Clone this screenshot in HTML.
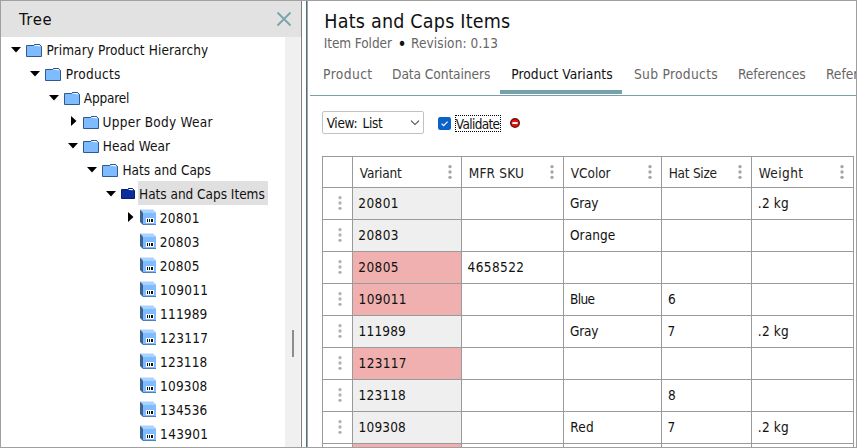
<!DOCTYPE html>
<html><head><meta charset="utf-8"><title>Tree</title><style>
html,body{margin:0;padding:0;}
body{width:857px;height:448px;position:relative;overflow:hidden;background:#fff;font-family:"DejaVu Sans Condensed","DejaVu Sans","Liberation Sans",sans-serif;font-stretch:condensed;color:#111;font-size:13.5px;}
.a{position:absolute;}
.t{position:absolute;white-space:nowrap;line-height:20px;height:20px;}
.frame{left:0;top:0;width:855px;height:446px;border:1px solid #a0a0a0;z-index:50;pointer-events:none;}
.hdr{left:1px;top:1px;width:300px;height:35.5px;background:#e2e2e2;}
.track{left:285px;top:37px;width:16px;height:410px;background:#f0f0f0;}
.thumb{left:292px;top:330px;width:2px;height:27px;background:#8c8c8c;}
.hl{left:138px;top:181px;width:130px;height:24px;background:#e0e0e0;}
.vl{width:1px;top:1px;height:446px;}
.gl{background:#9a9a9a;}
.gray{color:#666;}
</style></head><body>
<div class="a hdr"></div>
<div class="t " id="tree" style="left:19.00px;top:10.00px;font-size:16.5px;letter-spacing:0.693px;">Tree</div>
<svg class="a" style="left:275px;top:10px" width="18" height="18" viewBox="0 0 18 18"><path d="M2.5 2.5 L15.5 15.5 M15.5 2.5 L2.5 15.5" stroke="#7aa3ac" stroke-width="1.8" fill="none"/></svg>
<div class="a track"></div><div class="a thumb"></div>
<div class="a vl" style="left:300px;background:#f8f8f8;top:37px;height:410px"></div>
<div class="a vl" style="left:301px;background:#808080"></div>
<div class="a vl" style="left:306px;background:#686868"></div>
<div class="a vl" style="left:307px;background:#8ab0ba"></div>
<div class="a hl"></div>
<svg class="a" style="left:11px;top:47px" width="10" height="6" viewBox="0 0 10 6"><path d="M0 0 L10 0 L5 5.5 Z" fill="#000"/></svg>
<svg class="a" style="left:26px;top:44px" width="16" height="13" viewBox="0 0 16 13"><path d="M7.5 1.5 L8.5 0.5 L13.5 0.5 L15.5 2.5 L15.5 12.5 L0.5 12.5 L0.5 1.5 Z" fill="#7fbcff" stroke="#2f5a8a" stroke-width="1"/><path d="M8.2 1.6 L9 1 L13.2 1 L14.6 2.4 Z" fill="#fff"/><path d="M7.5 1.5 L8.5 0.5 L13.5 0.5 L15.5 2.5" fill="none" stroke="#2f5a8a" stroke-width="1"/></svg>
<div class="t " id="tr0" style="left:46.42px;top:40.00px;font-size:13.5px;letter-spacing:0.100px;">Primary Product Hierarchy</div>
<svg class="a" style="left:30px;top:71px" width="10" height="6" viewBox="0 0 10 6"><path d="M0 0 L10 0 L5 5.5 Z" fill="#000"/></svg>
<svg class="a" style="left:45px;top:68px" width="16" height="13" viewBox="0 0 16 13"><path d="M7.5 1.5 L8.5 0.5 L13.5 0.5 L15.5 2.5 L15.5 12.5 L0.5 12.5 L0.5 1.5 Z" fill="#7fbcff" stroke="#2f5a8a" stroke-width="1"/><path d="M8.2 1.6 L9 1 L13.2 1 L14.6 2.4 Z" fill="#fff"/><path d="M7.5 1.5 L8.5 0.5 L13.5 0.5 L15.5 2.5" fill="none" stroke="#2f5a8a" stroke-width="1"/></svg>
<div class="t " id="tr1" style="left:65.78px;top:64.00px;font-size:13.5px;letter-spacing:0.320px;">Products</div>
<svg class="a" style="left:49px;top:95px" width="10" height="6" viewBox="0 0 10 6"><path d="M0 0 L10 0 L5 5.5 Z" fill="#000"/></svg>
<svg class="a" style="left:64px;top:92px" width="16" height="13" viewBox="0 0 16 13"><path d="M7.5 1.5 L8.5 0.5 L13.5 0.5 L15.5 2.5 L15.5 12.5 L0.5 12.5 L0.5 1.5 Z" fill="#7fbcff" stroke="#2f5a8a" stroke-width="1"/><path d="M8.2 1.6 L9 1 L13.2 1 L14.6 2.4 Z" fill="#fff"/><path d="M7.5 1.5 L8.5 0.5 L13.5 0.5 L15.5 2.5" fill="none" stroke="#2f5a8a" stroke-width="1"/></svg>
<div class="t " id="tr2" style="left:83.78px;top:88.00px;font-size:13.5px;letter-spacing:-0.187px;">Apparel</div>
<svg class="a" style="left:71px;top:116px" width="6" height="10" viewBox="0 0 6 10"><path d="M0 0 L5.5 5 L0 10 Z" fill="#000"/></svg>
<svg class="a" style="left:83px;top:116px" width="16" height="13" viewBox="0 0 16 13"><path d="M7.5 1.5 L8.5 0.5 L13.5 0.5 L15.5 2.5 L15.5 12.5 L0.5 12.5 L0.5 1.5 Z" fill="#7fbcff" stroke="#2f5a8a" stroke-width="1"/><path d="M8.2 1.6 L9 1 L13.2 1 L14.6 2.4 Z" fill="#fff"/><path d="M7.5 1.5 L8.5 0.5 L13.5 0.5 L15.5 2.5" fill="none" stroke="#2f5a8a" stroke-width="1"/></svg>
<div class="t " id="tr3" style="left:102.56px;top:112.00px;font-size:13.5px;letter-spacing:0.263px;">Upper Body Wear</div>
<svg class="a" style="left:68px;top:143px" width="10" height="6" viewBox="0 0 10 6"><path d="M0 0 L10 0 L5 5.5 Z" fill="#000"/></svg>
<svg class="a" style="left:83px;top:140px" width="16" height="13" viewBox="0 0 16 13"><path d="M7.5 1.5 L8.5 0.5 L13.5 0.5 L15.5 2.5 L15.5 12.5 L0.5 12.5 L0.5 1.5 Z" fill="#7fbcff" stroke="#2f5a8a" stroke-width="1"/><path d="M8.2 1.6 L9 1 L13.2 1 L14.6 2.4 Z" fill="#fff"/><path d="M7.5 1.5 L8.5 0.5 L13.5 0.5 L15.5 2.5" fill="none" stroke="#2f5a8a" stroke-width="1"/></svg>
<div class="t " id="tr4" style="left:102.84px;top:136.00px;font-size:13.5px;letter-spacing:0.040px;">Head Wear</div>
<svg class="a" style="left:87px;top:167px" width="10" height="6" viewBox="0 0 10 6"><path d="M0 0 L10 0 L5 5.5 Z" fill="#000"/></svg>
<svg class="a" style="left:102px;top:164px" width="16" height="13" viewBox="0 0 16 13"><path d="M7.5 1.5 L8.5 0.5 L13.5 0.5 L15.5 2.5 L15.5 12.5 L0.5 12.5 L0.5 1.5 Z" fill="#7fbcff" stroke="#2f5a8a" stroke-width="1"/><path d="M8.2 1.6 L9 1 L13.2 1 L14.6 2.4 Z" fill="#fff"/><path d="M7.5 1.5 L8.5 0.5 L13.5 0.5 L15.5 2.5" fill="none" stroke="#2f5a8a" stroke-width="1"/></svg>
<div class="t " id="tr5" style="left:122.42px;top:160.00px;font-size:13.5px;letter-spacing:0.027px;">Hats and Caps</div>
<svg class="a" style="left:106px;top:191px" width="10" height="6" viewBox="0 0 10 6"><path d="M0 0 L10 0 L5 5.5 Z" fill="#000"/></svg>
<svg class="a" style="left:121px;top:188px" width="14" height="11" viewBox="0 0 14 11"><path d="M6.5 1.5 L7.5 0.5 L11.5 0.5 L13.5 2.5 L13.5 10.5 L0.5 10.5 L0.5 1.5 Z" fill="#0a2c9c" stroke="#091c66" stroke-width="1"/><path d="M7.4 1.9 L8.2 1 L11.3 1 L12.6 2.3 Z" fill="#fff"/></svg>
<div class="t " id="tr6" style="left:139.06px;top:184.00px;font-size:13.5px;letter-spacing:-0.018px;">Hats and Caps Items</div>
<svg class="a" style="left:128px;top:212px" width="6" height="10" viewBox="0 0 6 10"><path d="M0 0 L5.5 5 L0 10 Z" fill="#000"/></svg>
<svg class="a" style="left:140px;top:209px" width="16" height="16" viewBox="0 0 16 16"><path d="M0 0.5 L13 0.5 L16 3.5 L3 3.5 Z" fill="#a9d2ff"/><path d="M0 0.5 L3 3.5 L3 16 L0 13 Z" fill="#3f6492"/><rect x="3" y="3.5" width="13" height="12.5" fill="#7fbcff"/><path d="M3 15.5 L16 15.5" stroke="#4d7fb8" stroke-width="1"/><rect x="6" y="9" width="8" height="5" fill="#fff"/><rect x="7" y="10" width="1" height="3" fill="#111"/><rect x="9" y="10" width="1" height="3" fill="#111"/><rect x="11" y="10" width="2" height="3" fill="#111"/></svg>
<div class="t " id="tr7" style="left:159.84px;top:208.00px;font-size:13.5px;letter-spacing:0.280px;">20801</div>
<svg class="a" style="left:140px;top:233px" width="16" height="16" viewBox="0 0 16 16"><path d="M0 0.5 L13 0.5 L16 3.5 L3 3.5 Z" fill="#a9d2ff"/><path d="M0 0.5 L3 3.5 L3 16 L0 13 Z" fill="#3f6492"/><rect x="3" y="3.5" width="13" height="12.5" fill="#7fbcff"/><path d="M3 15.5 L16 15.5" stroke="#4d7fb8" stroke-width="1"/><rect x="6" y="9" width="8" height="5" fill="#fff"/><rect x="7" y="10" width="1" height="3" fill="#111"/><rect x="9" y="10" width="1" height="3" fill="#111"/><rect x="11" y="10" width="2" height="3" fill="#111"/></svg>
<div class="t " id="tr8" style="left:159.84px;top:232.00px;font-size:13.5px;letter-spacing:0.280px;">20803</div>
<svg class="a" style="left:140px;top:257px" width="16" height="16" viewBox="0 0 16 16"><path d="M0 0.5 L13 0.5 L16 3.5 L3 3.5 Z" fill="#a9d2ff"/><path d="M0 0.5 L3 3.5 L3 16 L0 13 Z" fill="#3f6492"/><rect x="3" y="3.5" width="13" height="12.5" fill="#7fbcff"/><path d="M3 15.5 L16 15.5" stroke="#4d7fb8" stroke-width="1"/><rect x="6" y="9" width="8" height="5" fill="#fff"/><rect x="7" y="10" width="1" height="3" fill="#111"/><rect x="9" y="10" width="1" height="3" fill="#111"/><rect x="11" y="10" width="2" height="3" fill="#111"/></svg>
<div class="t " id="tr9" style="left:159.84px;top:256.00px;font-size:13.5px;letter-spacing:0.280px;">20805</div>
<svg class="a" style="left:140px;top:281px" width="16" height="16" viewBox="0 0 16 16"><path d="M0 0.5 L13 0.5 L16 3.5 L3 3.5 Z" fill="#a9d2ff"/><path d="M0 0.5 L3 3.5 L3 16 L0 13 Z" fill="#3f6492"/><rect x="3" y="3.5" width="13" height="12.5" fill="#7fbcff"/><path d="M3 15.5 L16 15.5" stroke="#4d7fb8" stroke-width="1"/><rect x="6" y="9" width="8" height="5" fill="#fff"/><rect x="7" y="10" width="1" height="3" fill="#111"/><rect x="9" y="10" width="1" height="3" fill="#111"/><rect x="11" y="10" width="2" height="3" fill="#111"/></svg>
<div class="t " id="tr10" style="left:160.12px;top:280.00px;font-size:13.5px;letter-spacing:0.320px;">109011</div>
<svg class="a" style="left:140px;top:305px" width="16" height="16" viewBox="0 0 16 16"><path d="M0 0.5 L13 0.5 L16 3.5 L3 3.5 Z" fill="#a9d2ff"/><path d="M0 0.5 L3 3.5 L3 16 L0 13 Z" fill="#3f6492"/><rect x="3" y="3.5" width="13" height="12.5" fill="#7fbcff"/><path d="M3 15.5 L16 15.5" stroke="#4d7fb8" stroke-width="1"/><rect x="6" y="9" width="8" height="5" fill="#fff"/><rect x="7" y="10" width="1" height="3" fill="#111"/><rect x="9" y="10" width="1" height="3" fill="#111"/><rect x="11" y="10" width="2" height="3" fill="#111"/></svg>
<div class="t " id="tr11" style="left:160.12px;top:304.00px;font-size:13.5px;letter-spacing:0.160px;">111989</div>
<svg class="a" style="left:140px;top:329px" width="16" height="16" viewBox="0 0 16 16"><path d="M0 0.5 L13 0.5 L16 3.5 L3 3.5 Z" fill="#a9d2ff"/><path d="M0 0.5 L3 3.5 L3 16 L0 13 Z" fill="#3f6492"/><rect x="3" y="3.5" width="13" height="12.5" fill="#7fbcff"/><path d="M3 15.5 L16 15.5" stroke="#4d7fb8" stroke-width="1"/><rect x="6" y="9" width="8" height="5" fill="#fff"/><rect x="7" y="10" width="1" height="3" fill="#111"/><rect x="9" y="10" width="1" height="3" fill="#111"/><rect x="11" y="10" width="2" height="3" fill="#111"/></svg>
<div class="t " id="tr12" style="left:160.12px;top:328.00px;font-size:13.5px;letter-spacing:0.320px;">123117</div>
<svg class="a" style="left:140px;top:353px" width="16" height="16" viewBox="0 0 16 16"><path d="M0 0.5 L13 0.5 L16 3.5 L3 3.5 Z" fill="#a9d2ff"/><path d="M0 0.5 L3 3.5 L3 16 L0 13 Z" fill="#3f6492"/><rect x="3" y="3.5" width="13" height="12.5" fill="#7fbcff"/><path d="M3 15.5 L16 15.5" stroke="#4d7fb8" stroke-width="1"/><rect x="6" y="9" width="8" height="5" fill="#fff"/><rect x="7" y="10" width="1" height="3" fill="#111"/><rect x="9" y="10" width="1" height="3" fill="#111"/><rect x="11" y="10" width="2" height="3" fill="#111"/></svg>
<div class="t " id="tr13" style="left:160.12px;top:352.00px;font-size:13.5px;letter-spacing:0.160px;">123118</div>
<svg class="a" style="left:140px;top:377px" width="16" height="16" viewBox="0 0 16 16"><path d="M0 0.5 L13 0.5 L16 3.5 L3 3.5 Z" fill="#a9d2ff"/><path d="M0 0.5 L3 3.5 L3 16 L0 13 Z" fill="#3f6492"/><rect x="3" y="3.5" width="13" height="12.5" fill="#7fbcff"/><path d="M3 15.5 L16 15.5" stroke="#4d7fb8" stroke-width="1"/><rect x="6" y="9" width="8" height="5" fill="#fff"/><rect x="7" y="10" width="1" height="3" fill="#111"/><rect x="9" y="10" width="1" height="3" fill="#111"/><rect x="11" y="10" width="2" height="3" fill="#111"/></svg>
<div class="t " id="tr14" style="left:160.12px;top:376.00px;font-size:13.5px;letter-spacing:0.160px;">109308</div>
<svg class="a" style="left:140px;top:401px" width="16" height="16" viewBox="0 0 16 16"><path d="M0 0.5 L13 0.5 L16 3.5 L3 3.5 Z" fill="#a9d2ff"/><path d="M0 0.5 L3 3.5 L3 16 L0 13 Z" fill="#3f6492"/><rect x="3" y="3.5" width="13" height="12.5" fill="#7fbcff"/><path d="M3 15.5 L16 15.5" stroke="#4d7fb8" stroke-width="1"/><rect x="6" y="9" width="8" height="5" fill="#fff"/><rect x="7" y="10" width="1" height="3" fill="#111"/><rect x="9" y="10" width="1" height="3" fill="#111"/><rect x="11" y="10" width="2" height="3" fill="#111"/></svg>
<div class="t " id="tr15" style="left:160.12px;top:400.00px;font-size:13.5px;letter-spacing:0.160px;">134536</div>
<svg class="a" style="left:140px;top:425px" width="16" height="16" viewBox="0 0 16 16"><path d="M0 0.5 L13 0.5 L16 3.5 L3 3.5 Z" fill="#a9d2ff"/><path d="M0 0.5 L3 3.5 L3 16 L0 13 Z" fill="#3f6492"/><rect x="3" y="3.5" width="13" height="12.5" fill="#7fbcff"/><path d="M3 15.5 L16 15.5" stroke="#4d7fb8" stroke-width="1"/><rect x="6" y="9" width="8" height="5" fill="#fff"/><rect x="7" y="10" width="1" height="3" fill="#111"/><rect x="9" y="10" width="1" height="3" fill="#111"/><rect x="11" y="10" width="2" height="3" fill="#111"/></svg>
<div class="t " id="tr16" style="left:160.12px;top:424.00px;font-size:13.5px;letter-spacing:0.320px;">143901</div>
<div class="t " id="title" style="left:324.34px;top:11.50px;font-size:19.5px;letter-spacing:0.213px;">Hats and Caps Items</div>
<div class="t gray" id="sub1" style="left:323.72px;top:33.00px;font-size:13.5px;letter-spacing:-0.080px;">Item Folder</div>
<div class="t " id="sub2" style="left:397.38px;top:33.50px;font-size:17px;">•</div>
<div class="t gray" id="sub3" style="left:410.96px;top:33.00px;font-size:13.5px;letter-spacing:0.098px;">Revision: 0.13</div>
<div class="t gray" id="tab0" style="left:323.06px;top:64.00px;font-size:13.7px;letter-spacing:0.400px;">Product</div>
<div class="t gray" id="tab1" style="left:392.06px;top:64.00px;font-size:13.7px;letter-spacing:-0.114px;">Data Containers</div>
<div class="t " id="tab2" style="left:511.20px;top:64.00px;font-size:13.7px;letter-spacing:0.053px;">Product Variants</div>
<div class="t gray" id="tab3" style="left:634.00px;top:64.00px;font-size:13.7px;letter-spacing:0.291px;">Sub Products</div>
<div class="t gray" id="tab4" style="left:737.92px;top:64.00px;font-size:13.7px;letter-spacing:-0.071px;">References</div>
<div class="t gray" id="tab5" style="left:825.92px;top:64.00px;font-size:13.7px;">Referenced By</div>
<div class="a" style="left:500px;top:90px;width:122px;height:4px;background:#76a1aa"></div>
<div class="a" style="left:310px;top:95px;width:546px;height:1px;background:#76a1aa"></div>
<div class="a" style="left:322px;top:111px;width:100px;height:21px;border:1px solid #c2c2c2;border-radius:2px;background:#fff"></div>
<div class="t " id="view" style="left:326.64px;top:113.00px;font-size:13.5px;letter-spacing:-0.302px;word-spacing:1.6px;">View: List</div>
<svg class="a" style="left:410px;top:119px" width="10" height="8" viewBox="0 0 10 8"><path d="M1 1.6 L5 5.6 L9 1.6" stroke="#4a4a4a" stroke-width="1.05" fill="none"/></svg>
<svg class="a" style="left:438px;top:117px" width="13" height="13" viewBox="0 0 13 13"><rect x="0" y="0" width="13" height="13" rx="2.2" fill="#0b62c9"/><path d="M3.6 6.6 L5.6 8.6 L9.6 4.6" stroke="#fff" stroke-width="1.1" fill="none"/></svg>
<div class="a" style="left:455px;top:115px;width:44px;height:15px;border:1px dotted #000"></div>
<div class="t " id="validate" style="left:455.86px;top:114.00px;font-size:13.5px;letter-spacing:-0.663px;">Validate</div>
<svg class="a" style="left:509px;top:117px" width="12" height="12" viewBox="0 0 12 12"><circle cx="6" cy="6" r="4.3" fill="#e21414" stroke="#741010" stroke-width="1.4"/><rect x="3.4" y="5.1" width="5.2" height="1.9" fill="#fff"/></svg>
<div class="a" style="left:352px;top:187px;width:109px;height:32px;background:#efefef"></div>
<div class="a" style="left:352px;top:219px;width:109px;height:32px;background:#efefef"></div>
<div class="a" style="left:352px;top:251px;width:109px;height:32px;background:#f0b0b0"></div>
<div class="a" style="left:352px;top:283px;width:109px;height:32px;background:#f0b0b0"></div>
<div class="a" style="left:352px;top:315px;width:109px;height:32px;background:#efefef"></div>
<div class="a" style="left:352px;top:347px;width:109px;height:32px;background:#f0b0b0"></div>
<div class="a" style="left:352px;top:379px;width:109px;height:32px;background:#efefef"></div>
<div class="a" style="left:352px;top:411px;width:109px;height:32px;background:#efefef"></div>
<div class="a" style="left:352px;top:443px;width:109px;height:4px;background:#f0b0b0"></div>
<div class="a gl" style="left:322px;top:156px;width:532px;height:1px"></div>
<div class="a gl" style="left:322px;top:187px;width:532px;height:1px"></div>
<div class="a gl" style="left:322px;top:219px;width:532px;height:1px"></div>
<div class="a gl" style="left:322px;top:251px;width:532px;height:1px"></div>
<div class="a gl" style="left:322px;top:283px;width:532px;height:1px"></div>
<div class="a gl" style="left:322px;top:315px;width:532px;height:1px"></div>
<div class="a gl" style="left:322px;top:347px;width:532px;height:1px"></div>
<div class="a gl" style="left:322px;top:379px;width:532px;height:1px"></div>
<div class="a gl" style="left:322px;top:411px;width:532px;height:1px"></div>
<div class="a gl" style="left:322px;top:443px;width:532px;height:1px"></div>
<div class="a gl" style="left:322px;top:156px;width:1px;height:291px"></div>
<div class="a gl" style="left:352px;top:156px;width:1px;height:291px"></div>
<div class="a gl" style="left:461px;top:156px;width:1px;height:291px"></div>
<div class="a gl" style="left:563px;top:156px;width:1px;height:291px"></div>
<div class="a gl" style="left:661px;top:156px;width:1px;height:291px"></div>
<div class="a gl" style="left:751px;top:156px;width:1px;height:291px"></div>
<div class="a gl" style="left:853px;top:156px;width:1px;height:291px"></div>
<div class="t " id="h0" style="left:359.86px;top:163.00px;font-size:13.5px;letter-spacing:-0.160px;color:#222;">Variant</div>
<svg class="a" style="left:447.7px;top:164px" width="4" height="16" viewBox="0 0 4 16"><circle cx="2" cy="2.7" r="1.65" fill="#a4a4a4"/><circle cx="2" cy="8" r="1.65" fill="#a4a4a4"/><circle cx="2" cy="13.3" r="1.65" fill="#a4a4a4"/></svg>
<div class="t " id="h1" style="left:468.70px;top:163.00px;font-size:13.5px;letter-spacing:0.213px;color:#222;">MFR SKU</div>
<svg class="a" style="left:549.7px;top:164px" width="4" height="16" viewBox="0 0 4 16"><circle cx="2" cy="2.7" r="1.65" fill="#a4a4a4"/><circle cx="2" cy="8" r="1.65" fill="#a4a4a4"/><circle cx="2" cy="13.3" r="1.65" fill="#a4a4a4"/></svg>
<div class="t " id="h2" style="left:570.86px;top:163.00px;font-size:13.5px;letter-spacing:-0.064px;color:#222;">VColor</div>
<svg class="a" style="left:647.7px;top:164px" width="4" height="16" viewBox="0 0 4 16"><circle cx="2" cy="2.7" r="1.65" fill="#a4a4a4"/><circle cx="2" cy="8" r="1.65" fill="#a4a4a4"/><circle cx="2" cy="13.3" r="1.65" fill="#a4a4a4"/></svg>
<div class="t " id="h3" style="left:668.70px;top:163.00px;font-size:13.5px;letter-spacing:-0.251px;color:#222;">Hat Size</div>
<svg class="a" style="left:737.7px;top:164px" width="4" height="16" viewBox="0 0 4 16"><circle cx="2" cy="2.7" r="1.65" fill="#a4a4a4"/><circle cx="2" cy="8" r="1.65" fill="#a4a4a4"/><circle cx="2" cy="13.3" r="1.65" fill="#a4a4a4"/></svg>
<div class="t " id="h4" style="left:758.64px;top:163.00px;font-size:13.5px;letter-spacing:0.448px;color:#222;">Weight</div>
<svg class="a" style="left:839.7px;top:164px" width="4" height="16" viewBox="0 0 4 16"><circle cx="2" cy="2.7" r="1.65" fill="#a4a4a4"/><circle cx="2" cy="8" r="1.65" fill="#a4a4a4"/><circle cx="2" cy="13.3" r="1.65" fill="#a4a4a4"/></svg>
<svg class="a" style="left:338px;top:195.0px" width="4" height="16" viewBox="0 0 4 16"><circle cx="2" cy="2.7" r="1.65" fill="#b0b0b0"/><circle cx="2" cy="8" r="1.65" fill="#b0b0b0"/><circle cx="2" cy="13.3" r="1.65" fill="#b0b0b0"/></svg>
<div class="t " id="c0_0" style="left:358.34px;top:192.50px;font-size:13.5px;letter-spacing:0.400px;">20801</div>
<div class="t " id="c0_2" style="left:570.00px;top:192.50px;font-size:13.5px;letter-spacing:-0.160px;">Gray</div>
<div class="t " id="c0_4" style="left:757.84px;top:192.50px;font-size:13.5px;letter-spacing:0.200px;">.2 kg</div>
<svg class="a" style="left:338px;top:227.0px" width="4" height="16" viewBox="0 0 4 16"><circle cx="2" cy="2.7" r="1.65" fill="#b0b0b0"/><circle cx="2" cy="8" r="1.65" fill="#b0b0b0"/><circle cx="2" cy="13.3" r="1.65" fill="#b0b0b0"/></svg>
<div class="t " id="c1_0" style="left:358.34px;top:224.50px;font-size:13.5px;letter-spacing:0.400px;">20803</div>
<div class="t " id="c1_2" style="left:570.00px;top:224.50px;font-size:13.5px;letter-spacing:0.064px;">Orange</div>
<svg class="a" style="left:338px;top:259.0px" width="4" height="16" viewBox="0 0 4 16"><circle cx="2" cy="2.7" r="1.65" fill="#b0b0b0"/><circle cx="2" cy="8" r="1.65" fill="#b0b0b0"/><circle cx="2" cy="13.3" r="1.65" fill="#b0b0b0"/></svg>
<div class="t " id="c2_0" style="left:358.34px;top:256.50px;font-size:13.5px;letter-spacing:0.400px;">20805</div>
<div class="t " id="c2_1" style="left:467.56px;top:256.50px;font-size:13.5px;letter-spacing:0.400px;">4658522</div>
<svg class="a" style="left:338px;top:291.0px" width="4" height="16" viewBox="0 0 4 16"><circle cx="2" cy="2.7" r="1.65" fill="#b0b0b0"/><circle cx="2" cy="8" r="1.65" fill="#b0b0b0"/><circle cx="2" cy="13.3" r="1.65" fill="#b0b0b0"/></svg>
<div class="t " id="c3_0" style="left:358.62px;top:288.50px;font-size:13.5px;letter-spacing:0.320px;">109011</div>
<div class="t " id="c3_2" style="left:569.92px;top:288.50px;font-size:13.5px;letter-spacing:-0.587px;">Blue</div>
<div class="t " id="c3_3" style="left:667.92px;top:288.50px;font-size:13.5px;">6</div>
<svg class="a" style="left:338px;top:323.0px" width="4" height="16" viewBox="0 0 4 16"><circle cx="2" cy="2.7" r="1.65" fill="#b0b0b0"/><circle cx="2" cy="8" r="1.65" fill="#b0b0b0"/><circle cx="2" cy="13.3" r="1.65" fill="#b0b0b0"/></svg>
<div class="t " id="c4_0" style="left:358.62px;top:320.50px;font-size:13.5px;letter-spacing:0.160px;">111989</div>
<div class="t " id="c4_2" style="left:570.00px;top:320.50px;font-size:13.5px;letter-spacing:-0.160px;">Gray</div>
<div class="t " id="c4_3" style="left:667.48px;top:320.50px;font-size:13.5px;">7</div>
<div class="t " id="c4_4" style="left:757.84px;top:320.50px;font-size:13.5px;letter-spacing:0.200px;">.2 kg</div>
<svg class="a" style="left:338px;top:355.0px" width="4" height="16" viewBox="0 0 4 16"><circle cx="2" cy="2.7" r="1.65" fill="#b0b0b0"/><circle cx="2" cy="8" r="1.65" fill="#b0b0b0"/><circle cx="2" cy="13.3" r="1.65" fill="#b0b0b0"/></svg>
<div class="t " id="c5_0" style="left:358.62px;top:352.50px;font-size:13.5px;letter-spacing:0.320px;">123117</div>
<svg class="a" style="left:338px;top:387.0px" width="4" height="16" viewBox="0 0 4 16"><circle cx="2" cy="2.7" r="1.65" fill="#b0b0b0"/><circle cx="2" cy="8" r="1.65" fill="#b0b0b0"/><circle cx="2" cy="13.3" r="1.65" fill="#b0b0b0"/></svg>
<div class="t " id="c6_0" style="left:358.62px;top:384.50px;font-size:13.5px;letter-spacing:0.160px;">123118</div>
<div class="t " id="c6_3" style="left:668.00px;top:384.50px;font-size:13.5px;">8</div>
<svg class="a" style="left:338px;top:419.0px" width="4" height="16" viewBox="0 0 4 16"><circle cx="2" cy="2.7" r="1.65" fill="#b0b0b0"/><circle cx="2" cy="8" r="1.65" fill="#b0b0b0"/><circle cx="2" cy="13.3" r="1.65" fill="#b0b0b0"/></svg>
<div class="t " id="c7_0" style="left:358.62px;top:416.50px;font-size:13.5px;letter-spacing:0.160px;">109308</div>
<div class="t " id="c7_2" style="left:570.28px;top:416.50px;font-size:13.5px;letter-spacing:0.240px;">Red</div>
<div class="t " id="c7_3" style="left:667.48px;top:416.50px;font-size:13.5px;">7</div>
<div class="t " id="c7_4" style="left:757.84px;top:416.50px;font-size:13.5px;letter-spacing:0.200px;">.2 kg</div>
<svg class="a" style="left:338px;top:451px" width="4" height="16" viewBox="0 0 4 16"><circle cx="2" cy="2.7" r="1.65" fill="#b0b0b0"/><circle cx="2" cy="8" r="1.65" fill="#b0b0b0"/><circle cx="2" cy="13.3" r="1.65" fill="#b0b0b0"/></svg>
<div class="a frame"></div>
</body></html>
